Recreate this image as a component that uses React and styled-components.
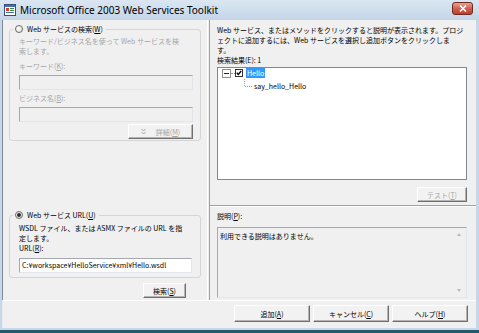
import React from "react";
import styled, { createGlobalStyle } from "styled-components";

const GlobalStyle = createGlobalStyle`
  html, body {
    margin: 0;
    padding: 0;
    background: #24586a;
  }
  body {
    width: 479px;
    height: 333px;
    overflow: hidden;
    font-family: "Noto Sans CJK JP", "Noto Sans", sans-serif;
    font-size: 7px;
    line-height: 10px;
    color: #000;
  }
  * { box-sizing: border-box; }
  u { text-underline-offset: 1px; }
`;

const Window = styled.div`
  width: 479px;
  height: 333px;
  display: flex;
  flex-direction: column;
  border-bottom: 3px solid #24586a;
`;

const TitleBar = styled.div`
  height: 20px;
  flex-shrink: 0;
  display: flex;
  align-items: center;
  padding: 0 6px 0 4px;
  gap: 4px;
  background: linear-gradient(#dbe6f2, #c4d5e8);
`;

const Caption = styled.span`
  flex: 1;
  font-family: "Noto Sans", "Liberation Sans", sans-serif;
  font-size: 10px;
  color: #000;
  white-space: nowrap;
`;

const CloseButton = styled.div`
  width: 21px;
  height: 13px;
  margin-top: -3px;
  border: 1px solid #6d2b22;
  border-radius: 3px;
  display: flex;
  align-items: center;
  justify-content: center;
  background: linear-gradient(#e8a396, #d0604f 50%, #bf3f2d);
`;

const Frame = styled.div`
  flex: 1;
  display: flex;
  flex-direction: column;
  padding: 0 3px 2px 2px;
  background: #c7d7e8;
`;

const Main = styled.div`
  height: 280px;
  display: flex;
  background: #f0f0f0;
  border-left: 1px solid #7f8a96;
`;

const LeftPane = styled.div`
  width: 204px;
  display: flex;
  flex-direction: column;
  padding: 4px 6px 2px 6px;
`;

const Splitter = styled.div`
  width: 3px;
  border-left: 1px solid #ffffff;
  border-right: 1px solid #a0a0a0;
`;

const RightPane = styled.div`
  flex: 1;
  display: flex;
  flex-direction: column;
`;

const Group = styled.fieldset`
  margin: ${(p) => (p.$pushed ? "auto 0 0 0" : "0")};
  padding: ${(p) => p.$pad};
  border: 1px solid #d5d5d5;
  border-radius: 3px;
  min-width: 0;
  display: flex;
  flex-direction: column;
`;

const Legend = styled.legend`
  margin-left: -6px;
  padding: 0 3px 0 2px;
  height: 10px;
  display: flex;
  align-items: center;
  gap: 4px;
  white-space: nowrap;
`;

const Radio = styled.span`
  width: 8px;
  height: 8px;
  border-radius: 50%;
  border: 1px solid #6a6a6a;
  background: radial-gradient(circle at 35% 35%, #ffffff, #dcdcdc);
  display: inline-flex;
  align-items: center;
  justify-content: center;
  &::after {
    content: "";
    width: 4px;
    height: 4px;
    border-radius: 50%;
    background: ${(p) => (p.$checked ? "#2b2b2b" : "transparent")};
  }
`;

const Text = styled.div`
  color: ${(p) => (p.$disabled ? "#a6a6a6" : "#000")};
  margin-top: ${(p) => p.$mt || 0}px;
  white-space: nowrap;
`;

const TextBox = styled.div`
  height: 15px;
  margin-top: ${(p) => p.$mt || 0}px;
  padding: 0 2px;
  line-height: 13px;
  border: 1px solid;
  border-color: #a5a8ae #e2e6ea #e2e6ea #a5a8ae;
  background: ${(p) => (p.$disabled ? "#f0f0f0" : "#ffffff")};
  white-space: nowrap;
  overflow: hidden;
`;

const ButtonRow = styled.div`
  display: flex;
  justify-content: flex-end;
  margin-top: ${(p) => p.$mt || 0}px;
  margin-right: ${(p) => p.$mr || 0}px;
`;

const PushButton = styled.button`
  width: ${(p) => p.$w}px;
  height: ${(p) => p.$h || 15}px;
  padding: 0;
  font-family: inherit;
  font-size: 7px;
  line-height: 10px;
  color: ${(p) => (p.disabled ? "#a6a6a6" : "#000")};
  background: #f2f2f2;
  border: 1px solid;
  border-color: #ffffff #6f6f6f #6f6f6f #ffffff;
  box-shadow: inset -1px -1px 0 #b4b4b4;
  display: flex;
  align-items: center;
  justify-content: center;
  gap: ${(p) => p.$gap || 0}px;
`;

const Results = styled.div`
  height: 186px;
  flex-shrink: 0;
  display: flex;
  flex-direction: column;
  padding: 5px 9px 0 7px;
  border-bottom: 1px solid #a0a0a0;
`;

const TreeBox = styled.div`
  height: 113px;
  margin-top: 2px;
  border: 1px solid #828790;
  background: #ffffff;
  padding: 0 4px;
`;

const TreeRow = styled.div`
  height: 10px;
  margin-top: ${(p) => p.$mt || 0}px;
  display: flex;
  align-items: center;
  white-space: nowrap;
`;

const Dots = styled.span`
  width: ${(p) => p.$w}px;
  border-top: 1px dotted #9a9a9a;
`;

const Indent = styled.span`
  width: ${(p) => p.$w}px;
  flex-shrink: 0;
`;

const Selected = styled.span`
  margin-left: 3px;
  padding: 0 1px;
  background: #3399ff;
  color: #ffffff;
`;

const Detail = styled.div`
  flex: 1;
  display: flex;
  flex-direction: column;
  padding: 4px 9px 2px 7px;
  border-top: 1px solid #ffffff;
`;

const ReadOnlyBox = styled.div`
  flex: 1;
  margin-top: 6px;
  display: flex;
  border: 1px solid;
  border-color: #a5a8ae #e2e6ea #e2e6ea #a5a8ae;
  background: #f0f0f0;
`;

const BoxText = styled.div`
  flex: 1;
  padding: 3px 2px;
`;

const ScrollTrack = styled.div`
  width: 15px;
  display: flex;
  flex-direction: column;
  align-items: center;
  justify-content: space-between;
  padding: 5px 0;
`;

const Arrow = styled.span`
  width: 0;
  height: 0;
  border-left: 2.5px solid transparent;
  border-right: 2.5px solid transparent;
  ${(p) => (p.$down ? "border-top" : "border-bottom")}: 3px solid #b9b9b9;
`;

const ButtonBar = styled.div`
  height: 28px;
  display: flex;
  justify-content: flex-end;
  align-items: flex-start;
  gap: 3px;
  padding: 4px 8px 0 0;
  background: #f0f0f0;
  border-top: 1px solid #ffffff;
  border-left: 1px solid #e6ecf2;
`;

const AppIcon = () => (
  <svg width="12" height="12" viewBox="0 0 12 12">
    <rect x="0.5" y="0.5" width="11" height="11" fill="#ffffff" stroke="#35507f" />
    <rect x="1" y="1" width="10" height="2" fill="#4a6fb0" />
    <rect x="2" y="4" width="3" height="3" fill="#d63b2b" />
    <rect x="6" y="4" width="4" height="1" fill="#2f8f3a" />
    <rect x="6" y="6" width="4" height="1" fill="#2f8f3a" />
    <rect x="2" y="8" width="8" height="1" fill="#4a6fb0" />
  </svg>
);

const CloseGlyph = () => (
  <svg width="8" height="7" viewBox="0 0 8 7">
    <path d="M1 0.5 L7 6.5 M7 0.5 L1 6.5" stroke="#ffffff" strokeWidth="1.6" />
  </svg>
);

const MoreGlyph = () => (
  <svg width="5" height="7" viewBox="0 0 5 7">
    <path d="M0.5 1 L2.5 3 L4.5 1 M0.5 4 L2.5 6 L4.5 4" fill="none" stroke="#a6a6a6" />
  </svg>
);

const ExpandBox = () => (
  <svg width="9" height="9" viewBox="0 0 9 9">
    <rect x="0.5" y="0.5" width="8" height="8" fill="#ffffff" stroke="#919191" />
    <path d="M2 4.5 H7" stroke="#222222" />
  </svg>
);

const CheckBox = () => (
  <svg width="8" height="8" viewBox="0 0 8 8">
    <rect x="0.5" y="0.5" width="7" height="7" fill="#ffffff" stroke="#333333" />
    <path d="M1.8 3.8 L3.3 5.5 L6.2 2" fill="none" stroke="#000000" strokeWidth="1.3" />
  </svg>
);

const Connector = () => (
  <svg width="9" height="10" viewBox="0 0 9 10" style={{ alignSelf: "flex-start", marginTop: -2 }}>
    <path d="M0.5 0 V7.5 H8" fill="none" stroke="#9a9a9a" strokeDasharray="1 1" />
  </svg>
);

export default function App() {
  return (
    <>
      <GlobalStyle />
      <Window>
        <TitleBar>
          <AppIcon />
          <Caption>Microsoft Office 2003 Web Services Toolkit</Caption>
          <CloseButton>
            <CloseGlyph />
          </CloseButton>
        </TitleBar>
        <Frame>
          <Main>
            <LeftPane>
              <Group $pad="2px 7px 1px 9px">
                <Legend>
                  <Radio />
                  <span>Web サービスの検索(<u>W</u>)</span>
                </Legend>
                <Text $disabled>
                  キーワード/ビジネス名を使って Web サービスを検
                  <br />
                  索します。
                </Text>
                <Text $disabled $mt={5}>キーワード(<u>K</u>):</Text>
                <TextBox $disabled $mt={4} />
                <Text $disabled $mt={3}>ビジネス名(<u>B</u>):</Text>
                <TextBox $disabled $mt={4} />
                <ButtonRow $mt={2}>
                  <PushButton disabled $w={65} $gap={10}>
                    <MoreGlyph />
                    <span>詳細(<u>M</u>)</span>
                  </PushButton>
                </ButtonRow>
              </Group>
              <Group $pushed $pad="3px 8px 4px 9px">
                <Legend>
                  <Radio $checked />
                  <span>Web サービス URL(<u>U</u>)</span>
                </Legend>
                <Text>
                  WSDL ファイル、または ASMX ファイルの URL を指
                  <br />
                  定します。
                </Text>
                <Text>URL(<u>R</u>):</Text>
                <TextBox $mt={5}>C:¥workspace¥HelloService¥xml¥Hello.wsdl</TextBox>
              </Group>
              <ButtonRow $mt={5} $mr={15}>
                <PushButton $w={43}>検索(<u>S</u>)</PushButton>
              </ButtonRow>
            </LeftPane>
            <Splitter />
            <RightPane>
              <Results>
                <Text>
                  Web サービス、またはメソッドをクリックすると説明が表示されます。プロジ
                  <br />
                  ェクトに追加するには、Web サービスを選択し追加ボタンをクリックしま
                  <br />
                  す。
                </Text>
                <Text>検索結果(E): 1</Text>
                <TreeBox>
                  <TreeRow>
                    <ExpandBox />
                    <Dots $w={4} />
                    <CheckBox />
                    <Selected>Hello</Selected>
                  </TreeRow>
                  <TreeRow $mt={3}>
                    <Indent $w={22} />
                    <Connector />
                    <span style={{ marginLeft: 1 }}>say_hello_Hello</span>
                  </TreeRow>
                </TreeBox>
                <ButtonRow $mt={7}>
                  <PushButton disabled $w={50}>テスト(<u>T</u>)</PushButton>
                </ButtonRow>
              </Results>
              <Detail>
                <Text>説明(<u>P</u>):</Text>
                <ReadOnlyBox>
                  <BoxText>利用できる説明はありません。</BoxText>
                  <ScrollTrack>
                    <Arrow />
                    <Arrow $down />
                  </ScrollTrack>
                </ReadOnlyBox>
              </Detail>
            </RightPane>
          </Main>
          <ButtonBar>
            <PushButton $w={76} $h={17}>追加(<u>A</u>)</PushButton>
            <PushButton $w={76} $h={17}>キャンセル(<u>C</u>)</PushButton>
            <PushButton $w={76} $h={17}>ヘルプ(<u>H</u>)</PushButton>
          </ButtonBar>
        </Frame>
      </Window>
    </>
  );
}
